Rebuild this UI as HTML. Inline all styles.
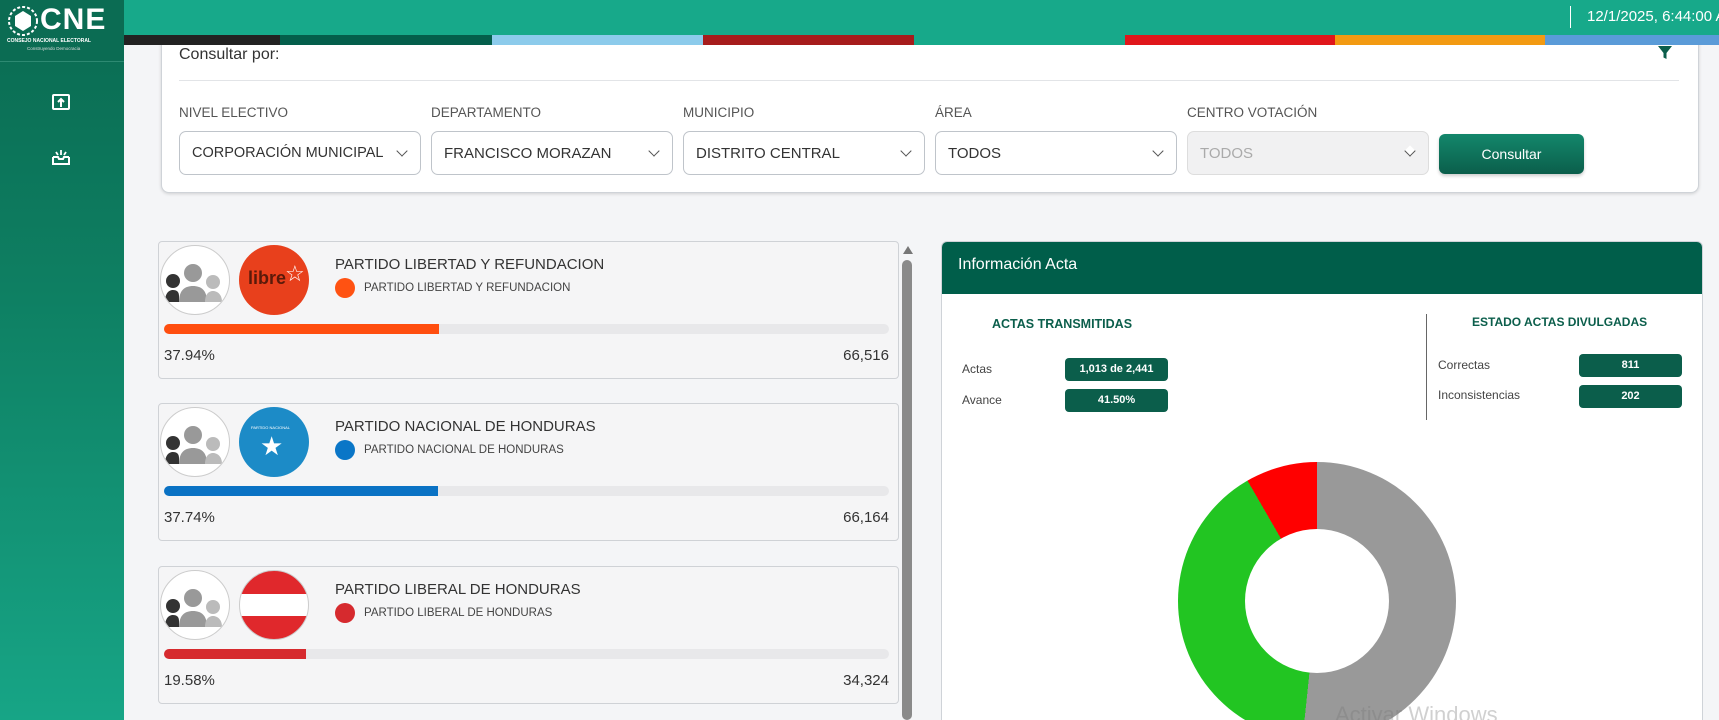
<!DOCTYPE html>
<html><head><meta charset="utf-8"><style>
*{box-sizing:border-box;margin:0;padding:0}
html,body{width:1719px;height:720px;overflow:hidden}
body{background:#f4f5f7;font-family:"Liberation Sans",sans-serif;color:#333}
#wrap{position:relative;width:1719px;height:720px;overflow:hidden}
.abs{position:absolute}
#side{left:0;top:0;width:124px;height:720px;background:linear-gradient(#0a6a51,#0e7f62 40%,#17a586);z-index:5}
#logo{left:0;top:0;width:124px;height:62px;background:#0b6c53;border-bottom:1px solid #2d8a72}
#top{left:124px;top:0;width:1595px;height:35px;background:#17a98a;z-index:4}
.stripe{top:35px;height:10px;z-index:4}
.card{background:#fff;border:1px solid #cfd3d8;border-radius:8px}
.lbl{font-size:13.5px;color:#555;top:105px}
.sel{top:131px;height:44px;width:242px;border:1px solid #bfc4ca;border-radius:7px;background:#fff;font-size:15px;color:#333;padding:13px 12px;white-space:nowrap;overflow:hidden}
.sel:after{content:"";position:absolute;right:14px;top:15px;width:7px;height:7px;border-right:1.5px solid #555;border-bottom:1.5px solid #555;transform:rotate(45deg);background:#fff}
.party{left:158px;width:741px;height:138px;background:#f5f5f6;border:1px solid #cfd2d6;border-radius:4px}
.av{width:70px;height:70px;border-radius:50%;top:3px;border:1px solid #ccc;background:#fff;overflow:hidden}
.pt{left:176px;top:14px;font-size:15px;color:#333}
.dot{left:176px;top:36px;width:20px;height:20px;border-radius:50%}
.ps{left:205px;top:40px;font-size:11.5px;color:#444}
.bar{left:5px;top:82px;width:725px;height:10px;border-radius:5px;background:#e8e8ea;overflow:hidden}
.bar div{height:100%}
.pc{left:5px;top:105px;font-size:15px;color:#333}
.ct{right:9px;top:105px;font-size:15px;color:#333}
.pill{background:#0b5e4b;color:#fff;border-radius:4px;font-size:11px;font-weight:bold;text-align:center;height:23px;line-height:23px}
.k{font-size:12px;color:#444}
</style></head><body><div id="wrap">
<div id="side" class="abs">
 <div id="logo" class="abs">
  <svg class="abs" style="left:6px;top:4px" width="34" height="34" viewBox="0 0 34 34"><circle cx="17" cy="17" r="14" fill="none" stroke="#fff" stroke-width="2" stroke-dasharray="3 2"/><path d="M17 7 L25 12 L25 22 L17 27 L9 22 L9 12Z" fill="#fff"/></svg>
  <div class="abs" style="left:40px;top:3px;font-size:30px;font-weight:bold;color:#fff;letter-spacing:1px">CNE</div>
  <div class="abs" style="left:7px;top:38px;font-size:5px;font-weight:bold;color:#fff;white-space:nowrap">CONSEJO NACIONAL ELECTORAL</div>
  <div class="abs" style="left:27px;top:46px;font-size:4.5px;color:#ddd;white-space:nowrap">Construyendo Democracia</div>
 </div>
 <svg class="abs" style="left:51px;top:92px" width="20" height="20" viewBox="0 0 20 20"><rect x="2" y="3" width="16" height="14" rx="1" fill="none" stroke="#fff" stroke-width="2"/><path d="M10 15V7M7 10l3-3 3 3" stroke="#fff" stroke-width="2" fill="none"/></svg>
 <svg class="abs" style="left:51px;top:147px" width="20" height="20" viewBox="0 0 20 20"><path d="M2 10v7h16v-7M2 10h5l1 2h4l1-2h5" fill="none" stroke="#fff" stroke-width="2"/><path d="M10 3v5M5 5l2 3M15 5l-2 3" stroke="#fff" stroke-width="1.8"/></svg>
</div>
<div id="top" class="abs">
 <div class="abs" style="left:1446px;top:6px;width:1px;height:22px;background:#fff"></div>
 <div class="abs" style="left:1463px;top:8px;font-size:15px;color:#fff;white-space:nowrap">12/1/2025, 6:44:00 A</div>
</div>
<div class="abs stripe" style="left:124px;width:156px;background:#222"></div>
<div class="abs stripe" style="left:280px;width:212px;background:#045e4b"></div>
<div class="abs stripe" style="left:492px;width:211px;background:#8ccbeb"></div>
<div class="abs stripe" style="left:703px;width:211px;background:#a61c1c"></div>
<div class="abs stripe" style="left:914px;width:211px;background:#17a98a"></div>
<div class="abs stripe" style="left:1125px;width:210px;background:#e0161b"></div>
<div class="abs stripe" style="left:1335px;width:210px;background:#f29a12"></div>
<div class="abs stripe" style="left:1545px;width:174px;background:#5a9bd8"></div>

<div class="abs card" style="left:161px;top:20px;width:1538px;height:173px;box-shadow:0 1px 3px rgba(0,0,0,.15)"></div>
<div class="abs" style="left:179px;top:46px;font-size:16px;color:#333">Consultar por:</div>
<svg class="abs" style="left:1657px;top:45px" width="16" height="16" viewBox="0 0 16 16"><path d="M1 1h14l-5.5 7v6l-3-1.5V8Z" fill="#0b5e4b"/></svg>
<div class="abs" style="left:179px;top:80px;width:1500px;height:1px;background:#e2e4e7"></div>
<div class="abs lbl" style="left:179px">NIVEL ELECTIVO</div>
<div class="abs lbl" style="left:431px">DEPARTAMENTO</div>
<div class="abs lbl" style="left:683px">MUNICIPIO</div>
<div class="abs lbl" style="left:935px">ÁREA</div>
<div class="abs lbl" style="left:1187px">CENTRO VOTACIÓN</div>
<div class="abs sel" style="left:179px;font-size:14.5px">CORPORACIÓN MUNICIPAL</div>
<div class="abs sel" style="left:431px">FRANCISCO MORAZAN</div>
<div class="abs sel" style="left:683px">DISTRITO CENTRAL</div>
<div class="abs sel" style="left:935px">TODOS</div>
<div class="abs sel" style="left:1187px;background:#f1f1f2;color:#aaa;border-color:#ddd">TODOS</div>
<div class="abs" style="left:1439px;top:134px;width:145px;height:40px;border-radius:6px;background:linear-gradient(#13876b,#0b5e4b);color:#fff;font-size:14px;text-align:center;line-height:40px;box-shadow:0 2px 3px rgba(0,0,0,.2)">Consultar</div>

<div class="abs party" style="top:241px">
 <div class="abs av" style="left:1px"><svg width="70" height="70" viewBox="0 0 70 70"><circle cx="12" cy="35" r="7" fill="#333"/><path d="M4 56c0-9 4-12 8-12s6 2 6 6v6z" fill="#333"/><circle cx="32" cy="27" r="9" fill="#999"/><path d="M18 56c0-12 6-16 14-16s14 4 14 16z" fill="#999"/><circle cx="52" cy="36" r="7" fill="#bbb"/><path d="M44 56c0-8 4-11 8-11s9 3 9 11z" fill="#bbb"/></svg></div>
 <div class="abs av" style="left:80px;background:#e8401c;border:none"><div class="abs" style="left:9px;top:23px;font-size:18px;font-weight:bold;color:#5a1a0a">libre</div><div class="abs" style="left:46px;top:16px;font-size:22px;color:#fff">☆</div></div>
 <div class="abs pt">PARTIDO LIBERTAD Y REFUNDACION</div>
 <div class="abs dot" style="background:#ff5212"></div>
 <div class="abs ps">PARTIDO LIBERTAD Y REFUNDACION</div>
 <div class="abs bar"><div style="width:37.94%;background:#ff4e0f"></div></div>
 <div class="abs pc">37.94%</div><div class="abs ct">66,516</div>
</div>
<div class="abs party" style="top:403px">
 <div class="abs av" style="left:1px"><svg width="70" height="70" viewBox="0 0 70 70"><circle cx="12" cy="35" r="7" fill="#333"/><path d="M4 56c0-9 4-12 8-12s6 2 6 6v6z" fill="#333"/><circle cx="32" cy="27" r="9" fill="#999"/><path d="M18 56c0-12 6-16 14-16s14 4 14 16z" fill="#999"/><circle cx="52" cy="36" r="7" fill="#bbb"/><path d="M44 56c0-8 4-11 8-11s9 3 9 11z" fill="#bbb"/></svg></div>
 <div class="abs av" style="left:80px;background:#1c8bc7;border:none"><div class="abs" style="left:12px;top:18px;font-size:4px;color:#fff">PARTIDO NACIONAL</div><div class="abs" style="left:21px;top:24px;font-size:26px;color:#fff">★</div></div>
 <div class="abs pt">PARTIDO NACIONAL DE HONDURAS</div>
 <div class="abs dot" style="background:#0a76c7"></div>
 <div class="abs ps">PARTIDO NACIONAL DE HONDURAS</div>
 <div class="abs bar"><div style="width:37.74%;background:#0a72c4"></div></div>
 <div class="abs pc">37.74%</div><div class="abs ct">66,164</div>
</div>
<div class="abs party" style="top:566px">
 <div class="abs av" style="left:1px"><svg width="70" height="70" viewBox="0 0 70 70"><circle cx="12" cy="35" r="7" fill="#333"/><path d="M4 56c0-9 4-12 8-12s6 2 6 6v6z" fill="#333"/><circle cx="32" cy="27" r="9" fill="#999"/><path d="M18 56c0-12 6-16 14-16s14 4 14 16z" fill="#999"/><circle cx="52" cy="36" r="7" fill="#bbb"/><path d="M44 56c0-8 4-11 8-11s9 3 9 11z" fill="#bbb"/></svg></div>
 <div class="abs av" style="left:80px;background:linear-gradient(#e0282c 0 34%,#fff 34% 66%,#e0282c 66%)"></div>
 <div class="abs pt">PARTIDO LIBERAL DE HONDURAS</div>
 <div class="abs dot" style="background:#d62a2e"></div>
 <div class="abs ps">PARTIDO LIBERAL DE HONDURAS</div>
 <div class="abs bar"><div style="width:19.58%;background:#d62a2e"></div></div>
 <div class="abs pc">19.58%</div><div class="abs ct">34,324</div>
</div>
<div class="abs" style="left:903px;top:246px;width:0;height:0;border-left:5px solid transparent;border-right:5px solid transparent;border-bottom:8px solid #777"></div>
<div class="abs" style="left:902px;top:260px;width:10px;height:460px;border-radius:5px;background:#8a8a8a"></div>

<div class="abs card" style="left:941px;top:241px;width:762px;height:500px;border-radius:6px;overflow:hidden">
 <div class="abs" style="left:0;top:0;width:100%;height:52px;background:#005e4a"></div>
 <div class="abs" style="left:16px;top:14px;font-size:16px;color:#fff">Información Acta</div>
</div>
<div class="abs" style="left:992px;top:317px;font-size:12.5px;font-weight:bold;color:#0b5e4b">ACTAS TRANSMITIDAS</div>
<div class="abs k" style="left:962px;top:362px">Actas</div>
<div class="abs k" style="left:962px;top:393px">Avance</div>
<div class="abs pill" style="left:1065px;top:358px;width:103px">1,013 de 2,441</div>
<div class="abs pill" style="left:1065px;top:389px;width:103px">41.50%</div>
<div class="abs" style="left:1426px;top:314px;width:1px;height:106px;background:#666"></div>
<div class="abs" style="left:1472px;top:315px;font-size:12px;font-weight:bold;color:#0b5e4b">ESTADO ACTAS DIVULGADAS</div>
<div class="abs k" style="left:1438px;top:358px">Correctas</div>
<div class="abs k" style="left:1438px;top:388px">Inconsistencias</div>
<div class="abs pill" style="left:1579px;top:354px;width:103px">811</div>
<div class="abs pill" style="left:1579px;top:385px;width:103px">202</div>
<div class="abs" style="left:1178px;top:462px;width:278px;height:278px;border-radius:50%;background:conic-gradient(#999 0deg 186deg,#22c522 186deg 330deg,#f00 330deg 360deg)"></div>
<div class="abs" style="left:1245px;top:529px;width:144px;height:144px;border-radius:50%;background:#fff"></div>
<div class="abs" style="left:1335px;top:702px;font-size:22px;color:rgba(120,120,120,.35)">Activar Windows</div>
</div></body></html>
